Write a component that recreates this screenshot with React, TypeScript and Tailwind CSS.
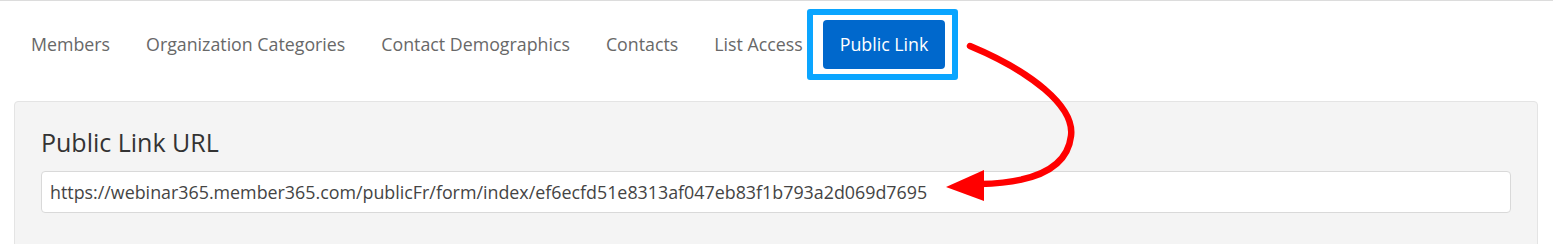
import React from "react";

const tabs = ["Members", "Organization Categories", "Contact Demographics", "Contacts", "List Access"];

export default function App() {
  return (
    <div className="relative w-[1553px] h-[244px] overflow-hidden bg-white border-t border-[#dcdcdc]" style={{ fontFamily: '"Open Sans", "Noto Sans", sans-serif' }}>
      <div className="flex items-center gap-[2px] pl-[14px] pt-[19px]">
        {tabs.map((t) => (
          <div key={t} className="px-[17px] text-[17.8px] text-[#686868] leading-[49px] whitespace-nowrap">
            {t}
          </div>
        ))}
        <div className="relative ml-[1px]">
          <div className="absolute left-[-16px] top-[-11px] right-[-13px] bottom-[-11px] border-[6px] border-[#0aa5ff] rounded-[3px]" />
          <div className="relative px-[17px] h-[49px] flex items-center bg-[#0068cc] rounded-[4px] text-white text-[17.8px] whitespace-nowrap">
            Public Link
          </div>
        </div>
      </div>
      <div className="mt-[32px] ml-[14px] mr-[15px] bg-[#f4f4f4] border border-[#e4e4e4] rounded-[4px] px-[26px] pt-[23px] pb-[40px]">
        <div className="text-[25px] leading-[34px] text-[#333]">Public Link URL</div>
        <div className="mt-[12px] h-[42px] bg-white border border-[#d9d9d9] rounded-[4px] flex items-center px-[8px] text-[17.85px] text-[#444] whitespace-nowrap">
          https://webinar365.member365.com/publicFr/form/index/ef6ecfd51e8313af047eb83f1b793a2d069d7695
        </div>
      </div>
      <svg className="absolute left-0 top-0 pointer-events-none" width="1553" height="244" viewBox="0 0 1553 244">
        <path d="M970,45 C1030,70 1075,105 1071,135 C1067,170 1030,182 980,183" fill="none" stroke="#ff0000" strokeWidth="6.5" strokeLinecap="round" />
        <polygon points="946,186 984,169 984,200" fill="#ff0000" />
      </svg>
    </div>
  );
}
